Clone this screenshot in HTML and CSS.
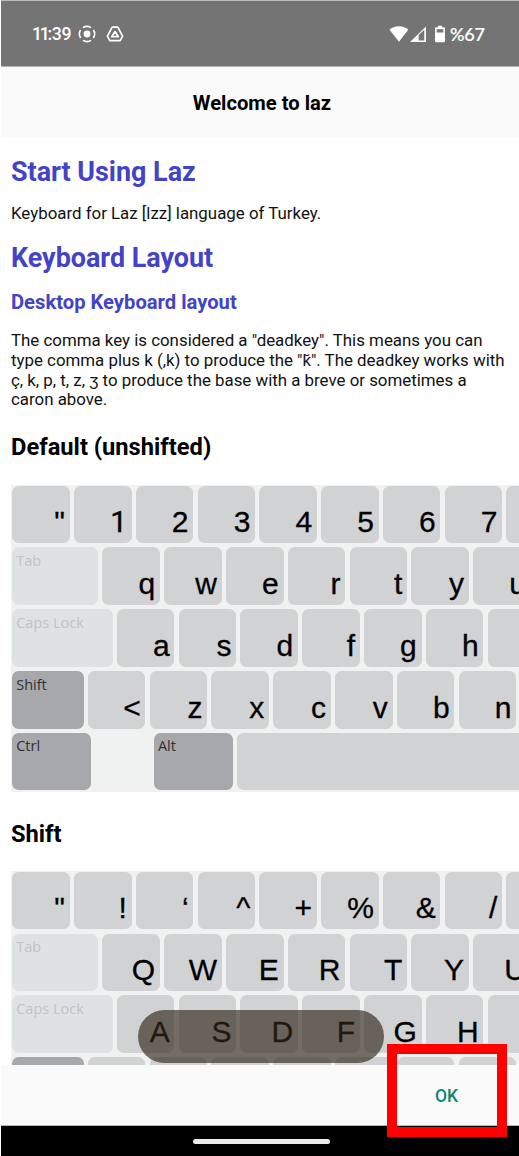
FILE: index.html
```html
<!DOCTYPE html>
<html lang="en">
<head>
<meta charset="utf-8">
<title>Welcome to laz</title>
<link rel="stylesheet" href="styles.css">
</head>
<body>
<div class="screen">
  <header class="status">
    <span class="clock"><span class="ones">11</span>:39</span>
    <svg class="rec" width="18" height="18" viewBox="0 0 18 18" fill="none" stroke="#fff" stroke-width="1.6"><circle cx="9" cy="9" r="3.4" fill="#fff" stroke="none"/><path d="M5 2.6A7.5 7.5 0 0 1 13 2.6M5 15.4A7.5 7.5 0 0 0 13 15.4M2.6 5A7.5 7.5 0 0 0 2.6 13M15.4 5A7.5 7.5 0 0 1 15.4 13"/></svg>
    <svg class="drive" width="18" height="18" viewBox="0 0 18 18" fill="none" stroke="#fff" stroke-width="1.7" stroke-linejoin="round"><path d="M6.2 2.2H11.8L16.6 11.2L14.2 15.7H3.8L1.4 11.2Z"/><path d="M9 6.5L12.3 11.7H5.7Z"/></svg>
    <span class="spacer"></span>
    <svg class="wifi" width="20" height="18" viewBox="0 0 20 18" fill="#fff"><path d="M.5 4.8Q4 1.2 10 1.2T19.2 4.8L10 16.8Z"/></svg>
    <svg class="signal" width="17" height="18" viewBox="0 0 17 18" fill="#fff" fill-rule="evenodd"><path d="M0 17L16 1.5V17ZM8.7 10.1V15.5H14.3V4.7Z"/></svg>
    <svg class="battery" width="10" height="18" viewBox="0 0 10 18" fill="#fff" fill-rule="evenodd"><path d="M3 .8H7V2.2H8.7Q10 2.2 10 3.5V16Q10 17.2 8.7 17.2H1.3Q0 17.2 0 16V3.5Q0 2.2 1.3 2.2H3ZM1.7 4.2V7.5H8.3V4.2Z"/></svg>
    <span class="percent">%67</span>
  </header>
  <div class="titlebar">Welcome to laz</div>
  <main class="content">
    <h1>Start Using Laz</h1>
    <p>Keyboard for Laz [lzz] language of Turkey.</p>
    <h1 class="second">Keyboard Layout</h1>
    <h2>Desktop Keyboard layout</h2>
    <p class="about">The comma key is considered a "deadkey". This means you can<br>type comma plus k (,k) to produce the "k̆". The deadkey works with<br>ç, k, p, t, z, ʒ to produce the base with a breve or sometimes a<br>caron above.</p>
    <h3>Default (unshifted)</h3>
    <div class="keyboard">
      <div class="row"><b>"</b><b class="one">1</b><b>2</b><b>3</b><b>4</b><b>5</b><b>6</b><b>7</b><b></b></div>
      <div class="row"><i class="tab">Tab</i><b>q</b><b>w</b><b>e</b><b>r</b><b>t</b><b>y</b><b>u</b></div>
      <div class="row"><i class="caps">Caps Lock</i><b>a</b><b>s</b><b>d</b><b>f</b><b>g</b><b>h</b><b></b></div>
      <div class="row"><i class="dark shift">Shift</i><b>&lt;</b><b>z</b><b>x</b><b>c</b><b>v</b><b>b</b><b>n</b></div>
      <div class="row"><i class="dark ctrl">Ctrl</i><i class="dark alt">Alt</i><b class="space"></b></div>
    </div>
    <h3 class="shifted">Shift</h3>
    <div class="keyboard">
      <div class="row"><b>"</b><b>!</b><b>‘</b><b>^</b><b>+</b><b>%</b><b>&amp;</b><b>/</b><b></b></div>
      <div class="row"><i class="tab">Tab</i><b>Q</b><b>W</b><b>E</b><b>R</b><b>T</b><b>Y</b><b>U</b></div>
      <div class="row"><i class="caps">Caps Lock</i><b>A</b><b>S</b><b>D</b><b>F</b><b>G</b><b>H</b><b></b></div>
      <div class="row"><i class="dark shift">Shift</i><b></b><b></b><b></b><b></b><b></b><b></b><b></b></div>
    </div>
    <div class="toast"></div>
  </main>
  <footer class="actions"><span class="ok">OK</span></footer>
  <div class="nav"><span class="handle"></span></div>
  <div class="highlight"></div>
</div>
</body>
</html>
```

FILE: styles.css
```css
* { box-sizing: border-box; }
body { margin: 0; background: #fff; font-family: Roboto, sans-serif; color: #000; }
.screen { position: relative; width: 519px; height: 1156px; padding-left: 1px; overflow: hidden; display: flex; flex-direction: column; }
.status { flex: none; height: 67px; background: #747474; border-top: 1px solid #bdbdbd; border-bottom: 1px solid #b5b5b5; color: #fff; display: flex; align-items: center; padding: 0 34px 0 31px; font: 500 18px/20px Lato, sans-serif; }
.status svg { flex: none; }
.clock { width: 39px; font: 500 17.7px/20px Roboto, sans-serif; letter-spacing: -.4px; white-space: nowrap; }
.ones { letter-spacing: -2.3px; }
.rec { margin-left: 7px; }
.drive { margin-left: 10px; }
.spacer { flex: 1; }
.signal { margin-left: 1px; }
.battery { margin-left: 8px; }
.percent { width: 35px; margin-left: 5px; white-space: nowrap; letter-spacing: -.2px; -webkit-text-stroke: .2px #fff; }
.titlebar { flex: none; height: 70px; background: #fafafa; text-align: center; padding-left: 4px; font-weight: 700; font-size: 20.2px; line-height: 73px; }
.content { position: relative; height: 928px; overflow: hidden; padding: 18.6px 0 0 10px; }
h1, h2, h3, p { margin: 0; white-space: nowrap; }
h1 { font-size: 26.9px; line-height: 32px; color: #4343c8; }
p { font-size: 16.88px; line-height: 19.7px; color: #111; margin-top: 16.3px; }
.second { margin-top: 18px; }
h2 { font-size: 20.2px; line-height: 24px; color: #4343c8; margin-top: 16.6px; }
.about { margin-top: 17px; }
h3 { font-size: 23.7px; line-height: 28px; margin-top: 23.1px; }
.shifted { margin-top: 27.9px; }
.keyboard { width: 700px; height: 307px; margin-top: 24px; padding: .6px 0 0 1.2px; background: #f0f2f1; display: flex; flex-direction: column; gap: 4.2px; }
.shifted + .keyboard { margin-top: 23.3px; }
.row { display: flex; gap: 4.2px; height: 57.6px; flex: none; }
.row b, .row i { flex: none; height: 57.6px; border-radius: 6.5px; font-style: normal; font-weight: 400; }
.row b { width: 57.6px; background: #d1d2d4; font: 30px/30px "Liberation Sans", sans-serif; text-align: right; padding: 21.6px 4.8px 0 0; -webkit-text-stroke: .3px #000; }
.row .one { font-family: Roboto, sans-serif; padding-right: 4.5px; }
.row i { background: #dee2e3; color: #c0c3c6; font: 14.5px/18px "Open Sans", sans-serif; padding: 4.6px 0 0 4px; }
.row .dark { background: #a7a8ac; color: #303033; }
.row .tab { width: 86px; }
.row .caps { width: 100.5px; }
.row .shift { width: 71.5px; }
.row .ctrl { width: 79px; }
.row .alt { width: 79px; margin-left: 58.5px; }
.row .space { width: 380px; }
.toast { position: absolute; left: 137px; top: 873px; width: 246px; height: 53px; border-radius: 27px; background: rgba(47, 38, 26, .65); }
.actions { flex: none; height: 61px; background: #fafafa; border-bottom: 1px solid #b0b8b4; display: flex; align-items: center; justify-content: flex-end; padding-right: 61px; }
.ok { color: #128273; font-weight: 500; font-size: 17.5px; line-height: 20px; padding-top: 2px; }
.nav { flex: 1; background: #000; display: flex; justify-content: center; padding: 12.5px 0 0 2px; }
.handle { width: 137px; height: 5px; border-radius: 3px; background: #ececec; }
.highlight { position: absolute; left: 387px; top: 1044px; width: 120px; height: 93px; border: 10px solid #f00; }
```
